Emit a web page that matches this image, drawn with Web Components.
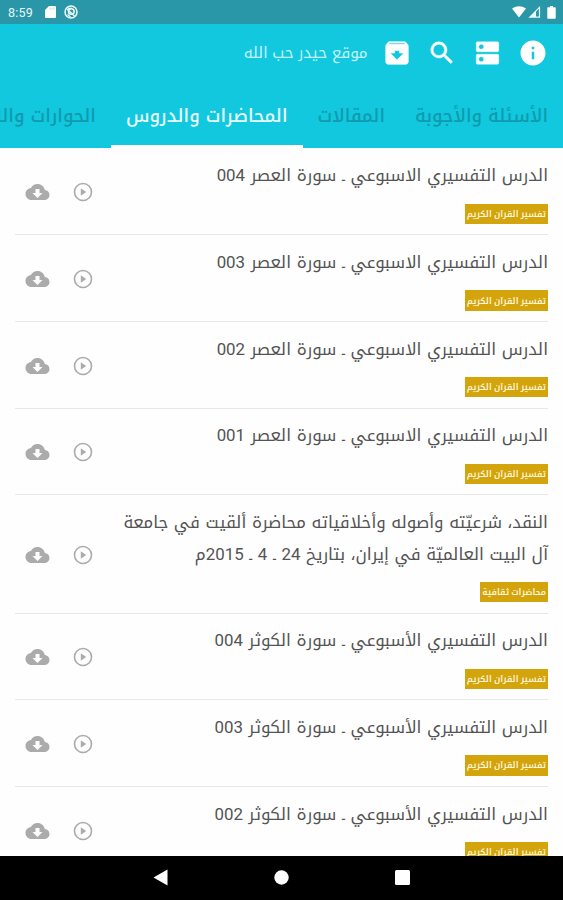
<!DOCTYPE html>
<html lang="ar">
<head>
<meta charset="utf-8">
<title>موقع حيدر حب الله</title>
<style>
html,body{margin:0;height:900px;overflow:hidden;background:#fefefe}
body{font-family:Roboto,"Noto Kufi Arabic","Noto Sans",sans-serif}
</style>
</head>
<body>
<lecture-app></lecture-app>
<script>
const define=(name,css,html,setup)=>{
  const t=document.createElement('template');
  t.innerHTML=`<style>*{box-sizing:border-box}svg{display:block;flex:none}${css}</style>${html}`;
  customElements.define(name,class extends HTMLElement{
    connectedCallback(){
      if(this.shadowRoot)return;
      const r=this.attachShadow({mode:'open'});
      r.append(t.content.cloneNode(true));
      if(setup)setup(this,r);
    }
  });
};

define('status-bar',`
:host{display:flex;align-items:center;height:23.5px;background:#2997a8;color:#e8f8fa;padding:1px 7px 0 8px;direction:ltr}
.time{font-size:12.5px;line-height:23px;width:37px;letter-spacing:.2px}
.left{display:flex;gap:8px;align-items:center;flex:1}
.right{display:flex;gap:2px;align-items:center}`,
`<span class="time">8:59</span>
<div class="left">
<svg width="11" height="12" viewBox="0 0 11 12"><path fill="#fff" d="M4 0h6q1 0 1 1v10q0 1-1 1H1q-1 0-1-1V4z"/><path d="M5 1.6v2M7 1.6v2M9 1.6v2" stroke="#9bd0d8" stroke-width=".7"/></svg>
<svg width="14" height="14" viewBox="0 0 14 14" fill="none" stroke="#f0fbfc"><circle cx="7" cy="7" r="6" stroke-width="1.5"/><circle cx="7.3" cy="6.5" r="2.8" stroke-width="1.5"/><path d="M3 4l7.5 7M3.5 9.5l3 2.5M4 3.3h4" stroke-width="1.2"/></svg>
</div>
<div class="right">
<svg width="14" height="12" viewBox="0 0 14 12"><path fill="#fff" d="M0 2.6Q7-2.2 14 2.6L7 11.5z"/></svg>
<svg width="13" height="12" viewBox="0 0 13 12"><path d="M1.8 11.2L11.5 1.4v9.8z" fill="none" stroke="#e8f8fa" stroke-width="1.2"/><path d="M8 5v6H2z" fill="#e8f8fa"/></svg>
<svg width="9" height="13" viewBox="0 0 9 13" style="margin-left:4px"><path fill="#fff" d="M3 0h3v1.3h2q.7 0 .7.7v10q0 .8-.7.8H1q-.7 0-.7-.8V2q0-.7.7-.7h2z"/></svg>
</div>`);

define('app-toolbar',`
:host{display:flex;align-items:center;justify-content:flex-end;height:59px;padding-right:15px;direction:ltr;color:#c4f3f9}
.title{font-size:15.4px;line-height:30px;word-spacing:.8px;direction:rtl;white-space:nowrap;margin-right:14.5px}
.icons{display:flex;gap:15px;align-items:center}`,
`<span class="title"><slot></slot></span>
<div class="icons">
<svg width="30" height="30" viewBox="0 0 24 24" fill="#fff"><path stroke="#fff" stroke-width=".5" d="M20.54 5.23l-1.39-1.68C18.88 3.21 18.47 3 18 3H6c-.47 0-.88.21-1.16.55L3.46 5.23C3.17 5.57 3 6.02 3 6.5V19c0 1.1.9 2 2 2h14c1.1 0 2-.9 2-2V6.5c0-.48-.17-.93-.46-1.27zM12 17.5L6.5 12H10v-2h4v2h3.5L12 17.5zM5.12 5l.81-1h12l.94 1H5.12z"/></svg>
<svg width="30" height="30" viewBox="0 0 24 24" fill="#fff"><path stroke="#fff" stroke-width=".4" d="M15.5 14h-.79l-.28-.27A6.471 6.471 0 0 0 16 9.5 6.5 6.5 0 1 0 9.5 16c1.61 0 3.09-.59 4.23-1.57l.27.28v.79l5 4.99L20.49 19l-4.99-5zm-6 0C7.01 14 5 11.99 5 9.5S7.01 5 9.5 5 14 7.01 14 9.5 11.99 14 9.5 14z"/></svg>
<svg width="31" height="30" viewBox="0 0 24 24" fill="#fff"><path stroke="#fff" stroke-width=".3" d="M20 13H4c-.55 0-1 .45-1 1v6c0 .55.45 1 1 1h16c.55 0 1-.45 1-1v-6c0-.55-.45-1-1-1zM7 19c-1.1 0-2-.9-2-2s.9-2 2-2 2 .9 2 2-.9 2-2 2zM20 3H4c-.55 0-1 .45-1 1v6c0 .55.45 1 1 1h16c.55 0 1-.45 1-1V4c0-.55-.45-1-1-1zM7 9c-1.1 0-2-.9-2-2s.9-2 2-2 2 .9 2 2-.9 2-2 2z"/></svg>
<svg width="30" height="30" viewBox="0 0 24 24" fill="#fff"><path d="M12 2C6.48 2 2 6.48 2 12s4.48 10 10 10 10-4.48 10-10S17.52 2 12 2zm1 15h-2v-6h2v6zm0-8h-2V7h2v2z"/></svg>
</div>`);

define('tab-bar',`
:host{display:flex;direction:rtl;height:65.5px;overflow:hidden}`,`<slot></slot>`);

define('tab-item',`
:host{display:flex;flex:none;align-items:center;justify-content:center;height:65.5px;padding:4px 15px 0;font-size:18.15px;word-spacing:1.5px;font-weight:500;color:#109aae;white-space:nowrap;border-bottom:3px solid transparent}
:host([active]){color:#e9fcfe;border-bottom-color:#fff}`,`<slot></slot>`);

define('category-tag',`
:host{display:flex;align-items:center;justify-content:center;width:fit-content;height:20.5px;padding:0 2px;background:#d3a40b;color:#fff6dc;font-size:8.7px;font-weight:600;white-space:nowrap;line-height:20px}`,`<slot></slot>`);

define('lecture-row',`
:host{display:flex;direction:rtl;align-items:center;margin:0 15px;padding:11.6px 0 10.4px;border-bottom:1px solid #e8e8e8;flex:none}
.body{flex:1;min-width:0}
.title{font-size:16.85px;line-height:31.6px;word-spacing:1.45px;color:#545454;white-space:nowrap;margin-bottom:11.6px}
.acts{direction:ltr;display:flex;gap:23px;align-items:center;padding-left:10px;color:#ababab}`,
`<div class="body"><div class="title"><slot></slot></div><category-tag></category-tag></div>
<div class="acts">
<svg width="25" height="24" viewBox="0 0 24 24" fill="currentColor"><path d="M19.35 10.04C18.67 6.59 15.64 4 12 4 9.11 4 6.6 5.64 5.35 8.04 2.34 8.36 0 10.91 0 14c0 3.31 2.69 6 6 6h13c2.76 0 5-2.24 5-5 0-2.64-2.05-4.78-4.65-4.96zM17 13l-5 5-5-5h3V9h4v4h3z"/></svg>
<svg width="20" height="20" viewBox="0 0 20 20"><circle cx="10" cy="10" r="8.5" fill="none" stroke="currentColor" stroke-width="1.6"/><path d="M7.8 6.2l5.4 3.8-5.4 3.8z" fill="currentColor"/></svg>
</div>`,(h,r)=>{r.querySelector('category-tag').textContent=h.getAttribute('tag')});

define('nav-bar',`
:host{display:flex;direction:ltr;align-items:center;justify-content:center;gap:106px;height:44.5px;background:#000;padding-right:1px;flex:none}`,
`<svg width="15" height="17" viewBox="0 0 15 17"><path d="M14.5.5v16L.5 8.5z" fill="#fff"/></svg>
<svg width="15" height="15" viewBox="0 0 15 15"><circle cx="7.5" cy="7.5" r="7.2" fill="#fff"/></svg>
<svg width="15" height="15" viewBox="0 0 15 15"><rect width="15" height="15" rx="1.5" fill="#fff"/></svg>`);

define('lecture-app',`
:host{display:flex;flex-direction:column;width:563px;height:900px;overflow:hidden;background:#fefefe}
header{background:#11c8de;flex:none;height:148px}
main{flex:1;min-height:0;overflow:hidden;display:flex;flex-direction:column;padding-top:.8px}`,
`<header>
<status-bar></status-bar>
<app-toolbar>موقع حيدر حب الله</app-toolbar>
<tab-bar>
<tab-item>الأسئلة والأجوبة</tab-item><tab-item>المقالات</tab-item><tab-item active>المحاضرات والدروس</tab-item><tab-item>الحوارات واللقاءات</tab-item>
</tab-bar>
</header>
<main>
<lecture-row tag="تفسير القرآن الكريم">الدرس التفسيري الاسبوعي ـ سورة العصر 004</lecture-row>
<lecture-row tag="تفسير القرآن الكريم">الدرس التفسيري الاسبوعي ـ سورة العصر 003</lecture-row>
<lecture-row tag="تفسير القرآن الكريم">الدرس التفسيري الاسبوعي ـ سورة العصر 002</lecture-row>
<lecture-row tag="تفسير القرآن الكريم">الدرس التفسيري الاسبوعي ـ سورة العصر 001</lecture-row>
<lecture-row tag="محاضرات ثقافية">النقد، شرعيّته وأصوله وأخلاقياته محاضرة ألقيت في جامعة<br>آل البيت العالميّة في إيران، بتاريخ 24 ـ 4 ـ 2015م</lecture-row>
<lecture-row tag="تفسير القرآن الكريم">الدرس التفسيري الأسبوعي ـ سورة الكوثر 004</lecture-row>
<lecture-row tag="تفسير القرآن الكريم">الدرس التفسيري الأسبوعي ـ سورة الكوثر 003</lecture-row>
<lecture-row tag="تفسير القرآن الكريم">الدرس التفسيري الأسبوعي ـ سورة الكوثر 002</lecture-row>
</main>
<nav-bar></nav-bar>`);
</script>
</body>
</html>
